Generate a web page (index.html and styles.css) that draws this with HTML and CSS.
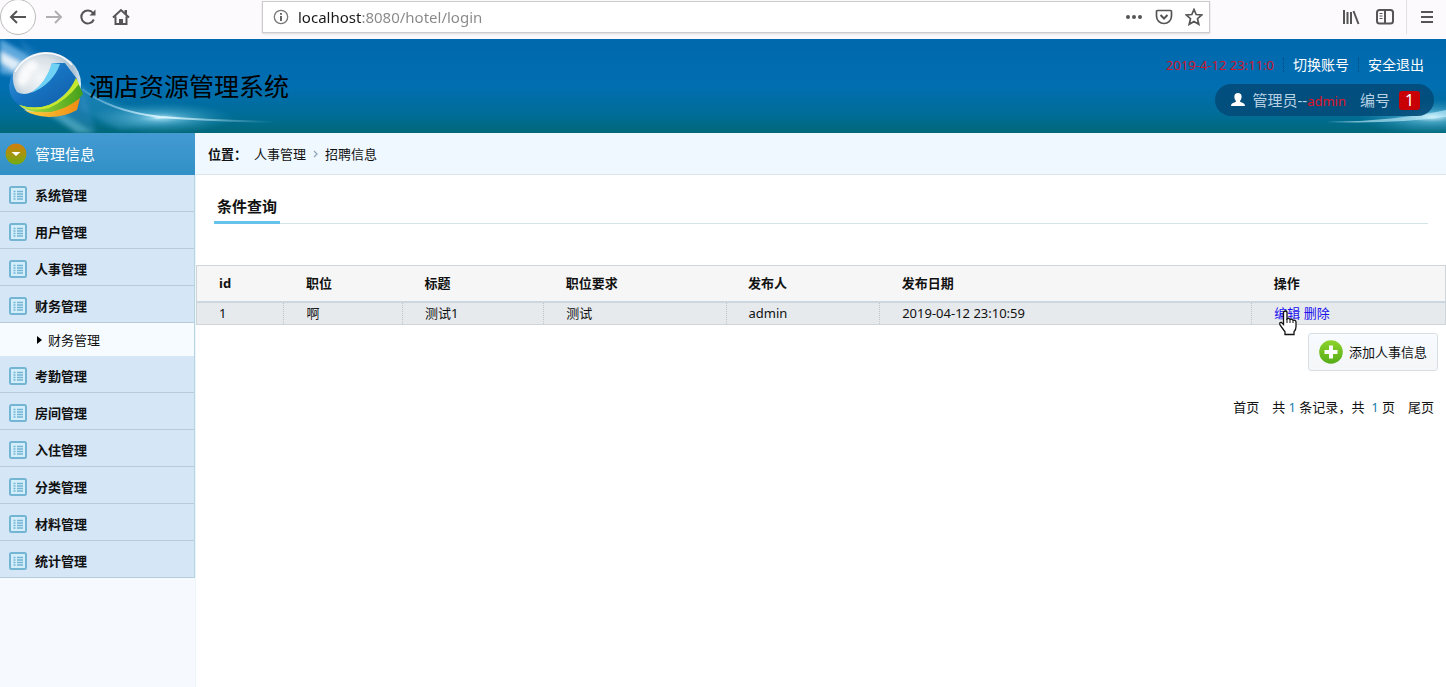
FILE: index.html
```html
<!DOCTYPE html>
<html lang="zh-CN">
<head>
<meta charset="utf-8">
<title>酒店资源管理系统</title>
<link rel="stylesheet" href="styles.css">
</head>
<body>
<div class="toolbar">
  <div class="nav-buttons">
    <button class="tool back" aria-label="Back"><svg width="20" height="18" viewBox="0 0 20 18"><path d="M18 9H3M9 3L3 9l6 6" class="stroke"/></svg></button>
    <button class="tool forward" aria-label="Forward"><svg width="20" height="18" viewBox="0 0 20 18"><path d="M2 9h15M11 3l6 6-6 6" class="stroke"/></svg></button>
    <button class="tool" aria-label="Reload"><svg width="18" height="18" viewBox="0 0 18 18"><path d="M14.800 11.500A6.500 6.500 0 1 1 14 5" class="stroke"/><path d="M16.500 1.500v6h-6z" fill="#555"/></svg></button>
    <button class="tool" aria-label="Home"><svg width="18" height="18" viewBox="0 0 18 18"><path d="M1 9.500L9 2l8 7.500M3.500 8.500V16h11V8.500" class="stroke"/><path d="M7 16v-5h4v5zM12.500 2H15v4.500l-2.500-2z" fill="#555"/></svg></button>
  </div>
  <div class="address">
    <svg width="16" height="16" viewBox="0 0 16 16"><circle cx="8" cy="8" r="6.700" fill="none" stroke="#777" stroke-width="1.300"/><path d="M8 7v5M8 4v1.800" stroke="#555" stroke-width="1.800"/></svg>
    <input class="url" type="text" aria-label="Address" value="localhost:8080/hotel/login">
    <button class="tool" aria-label="Page actions"><svg width="18" height="6" viewBox="0 0 18 6" fill="#555"><circle cx="3" cy="3" r="2"/><circle cx="9" cy="3" r="2"/><circle cx="15" cy="3" r="2"/></svg></button>
    <button class="tool" aria-label="Pocket"><svg width="18" height="18" viewBox="0 0 18 18"><path d="M2.500 2.500h13q1 0 1 1V8a7.500 7.500 0 0 1-15 0V3.500q0-1 1-1z" class="stroke thin"/><path d="M5.500 7L9 10.500 12.500 7" class="stroke"/></svg></button>
    <button class="tool" aria-label="Bookmark"><svg width="18" height="18" viewBox="0 0 18 18"><path d="M9 1.500l2.200 5 5.500.5-4.200 3.700 1.300 5.600L9 13.400l-4.800 2.900 1.300-5.600L1.300 7l5.500-.5z" class="stroke thin"/></svg></button>
  </div>
  <div class="side-buttons">
    <button class="tool" aria-label="Library"><svg width="18" height="18" viewBox="0 0 18 18"><path d="M2 2v14M5.500 4v12M9 4v12M11.500 3L16.500 16" class="stroke"/></svg></button>
    <button class="tool" aria-label="Sidebars"><svg width="18" height="18" viewBox="0 0 18 18"><rect x="1" y="2" width="16" height="13.500" rx="2.500" class="stroke"/><path d="M9 2v13" class="stroke"/><path d="M3.500 5.500h3M3.500 8h3M3.500 10.500h3" stroke="#555"/></svg></button>
    <button class="tool menu" aria-label="Menu"><svg width="14" height="16" viewBox="0 0 14 16"><path d="M1 3h12M1 8h12M1 13h12" class="stroke"/></svg></button>
  </div>
</div>

<header class="banner">
  <svg class="glow glow-left" width="300" height="94" viewBox="0 0 300 94">
    <defs>
      <radialGradient id="flare"><stop offset="0" stop-color="#dff8ff" stop-opacity=".95"/><stop offset=".3" stop-color="#6fc4e2" stop-opacity=".6"/><stop offset="1" stop-color="#2a94c0" stop-opacity="0"/></radialGradient>
      <linearGradient id="trail"><stop offset="0" stop-color="#8fcdf0" stop-opacity=".3"/><stop offset=".42" stop-color="#dff7ff"/><stop offset="1" stop-color="#79c9df" stop-opacity="0"/></linearGradient>
      <filter id="soft" x="-20%" y="-20%" width="140%" height="140%"><feGaussianBlur stdDeviation="2"/></filter>
    </defs>
    <g filter="url(#soft)">
      <path d="M0 0L28 16 46 42 0 34z" fill="#7dbdec" opacity=".75"/>
      <path d="M0 12L22 24 14 32 0 23z" fill="#fff" opacity=".8"/>
      <path d="M20 0L84 52 96 94 75 94 40 60z" fill="#4c9dd4" opacity=".3"/>
      <path d="M50 66L94 94H78L42 72z" fill="#6bc0d0" opacity=".5"/>
      <path d="M80 44Q115 74 200 80L120 90 80 70z" fill="#3c9ac6" opacity=".35"/>
    </g>
    <ellipse cx="160" cy="79" rx="75" ry="16" fill="url(#flare)"/>
    <ellipse cx="158" cy="79" rx="24" ry="5" fill="url(#flare)"/>
    <path d="M82 50Q110 72 160 78Q215 82 275 83" fill="none" stroke="url(#trail)" stroke-width="2"/>
  </svg>
  <svg class="glow glow-right" width="200" height="94" viewBox="0 0 200 94">
    <ellipse cx="186" cy="78" rx="75" ry="18" fill="url(#flare)"/>
    <path d="M80 83Q150 82 200 71V78Q150 85 80 83z" fill="#c9f3ff" opacity=".6"/>
  </svg>
  <div class="brand">
    <svg width="78" height="72" viewBox="0 0 78 72">
      <defs>
        <radialGradient id="globe" cx=".42" cy=".4" r=".6"><stop offset="0" stop-color="#f4f7f9"/><stop offset=".5" stop-color="#d9e1e7"/><stop offset=".8" stop-color="#a9c1d4"/><stop offset="1" stop-color="#e2f3fc"/></radialGradient>
        <linearGradient id="blue" x2="1" y2="1"><stop offset="0" stop-color="#3897de"/><stop offset=".5" stop-color="#1672c0"/><stop offset="1" stop-color="#125ba5"/></linearGradient>
        <linearGradient id="green" x1="0" x2="1"><stop offset="0" stop-color="#b8e345"/><stop offset="1" stop-color="#43a019"/></linearGradient>
        <linearGradient id="orange" x1="0" x2="1"><stop offset="0" stop-color="#ffd23f"/><stop offset="1" stop-color="#f08b12"/></linearGradient>
      </defs>
      <ellipse cx="39" cy="34" rx="35" ry="32" fill="url(#globe)"/>
      <path d="M10 33Q11 17 24 10q8 1 7 9-8 2-8 10l-7 8z" fill="#fff" opacity=".8" filter="url(#soft)"/>
      <path d="M8 22Q17 5 38 3q17 0 27 12" fill="none" stroke="#fff" stroke-width="1.500" opacity=".9"/>
      <path d="M6 23Q5 35 10 42 17 46 25 42 40 33 45 13H58L70 29Q58 48 42 55 26 61 12 55 2 48 2 36 3 28 6 23z" fill="url(#blue)"/>
      <path d="M24 43Q39 33 45 13l8 1Q46 34 24 43z" fill="#6fd2f5"/>
      <path d="M69 28L76 44Q68 54 57 59 43 64 28 62 18 60 12 55 28 60 42 55 60 48 69 28z" fill="url(#green)"/>
      <path d="M69 28l3 6Q60 50 42 58 27 62 12 55 28 60 42 55 60 48 69 28z" fill="#c7e82e"/>
      <path d="M17 60Q28 63 44 62 61 58 73 48L70 60Q58 67 42 67 26 66 17 60z" fill="url(#orange)"/>
    </svg>
    <h1 class="brand-name">酒店资源管理系统</h1>
  </div>
  <div class="account">
    <div class="quick-links">
      <span class="clock">2019-4-12 23:11:0</span>
      <a href="#">切换账号</a>
      <a href="#">安全退出</a>
    </div>
    <div class="user-pill">
      <svg width="14" height="14" viewBox="0 0 14 14"><path d="M7 0c5 0 4 6 2 8 0 2 5 1 5 5H0c0-4 5-3 5-5C3 6 2 0 7 0z" fill="#fff"/></svg>
      <span class="role">管理员--<b class="user-name">admin</b></span>
      <span>编号</span>
      <span class="badge">1</span>
    </div>
  </div>
</header>

<div class="workspace">
  <nav class="sidebar">
    <h2 class="sidebar-title"><svg width="22" height="22" viewBox="0 0 22 22"><defs><linearGradient id="knob" x2="0" y2="1"><stop offset="0" stop-color="#d57d0b"/><stop offset="1" stop-color="#72ad13"/></linearGradient></defs><circle cx="11" cy="11" r="10.500" fill="url(#knob)"/><path d="M6.500 9h9L11 13z" fill="#fff"/></svg>管理信息</h2>
    <svg class="symbols"><symbol id="list" viewBox="0 0 18 18"><rect x="1" y="1" width="16" height="16" rx="1.500" fill="#d3eefa" stroke="#74b5d4" stroke-width="2"/><path d="M4.500 5.500h2M8 5.500h6M4.500 8h2M8 8h6M4.500 10.500h2M8 10.500h6M4.500 13h2M8 13h6" stroke="#74b5d4" stroke-width="1.300"/></symbol></svg>
    <ul class="menu-list">
      <li><a href="#"><svg class="list-icon"><use href="#list"/></svg>系统管理</a></li>
      <li><a href="#"><svg class="list-icon"><use href="#list"/></svg>用户管理</a></li>
      <li><a href="#"><svg class="list-icon"><use href="#list"/></svg>人事管理</a></li>
      <li><a href="#"><svg class="list-icon"><use href="#list"/></svg>财务管理</a>
        <a href="#" class="sub"><svg width="5" height="8" viewBox="0 0 5 8"><path d="M0 0l5 4-5 4z"/></svg>财务管理</a></li>
      <li><a href="#"><svg class="list-icon"><use href="#list"/></svg>考勤管理</a></li>
      <li><a href="#"><svg class="list-icon"><use href="#list"/></svg>房间管理</a></li>
      <li><a href="#"><svg class="list-icon"><use href="#list"/></svg>入住管理</a></li>
      <li><a href="#"><svg class="list-icon"><use href="#list"/></svg>分类管理</a></li>
      <li><a href="#"><svg class="list-icon"><use href="#list"/></svg>材料管理</a></li>
      <li><a href="#"><svg class="list-icon"><use href="#list"/></svg>统计管理</a></li>
    </ul>
  </nav>

  <main class="content">
    <div class="crumbs"><b>位置<span class="mark">：</span></b><a href="#">人事管理</a><svg width="5" height="8" viewBox="0 0 5 8"><path d="M1 1l3 3-3 3" fill="none" stroke="#8fa8b8" stroke-width="1.300"/></svg><a href="#">招聘信息</a></div>
    <div class="tabs"><a href="#" class="tab">条件查询</a></div>
    <table class="records">
      <colgroup><col class="c-id"><col class="c-post"><col class="c-title"><col class="c-need"><col class="c-author"><col class="c-date"><col></colgroup>
      <thead><tr><th>id</th><th>职位</th><th>标题</th><th>职位要求</th><th>发布人</th><th>发布日期</th><th>操作</th></tr></thead>
      <tbody><tr><td>1</td><td>啊</td><td>测试1</td><td>测试</td><td>admin</td><td>2019-04-12 23:10:59</td>
        <td><span class="actions"><a href="#">编辑</a> <a href="#">删除</a><svg class="pointer" width="20" height="26" viewBox="0 0 20 26"><path d="M5.500 2q2-2 3.500 0v7q2-1.500 3 .5 2-1 3 .8 2.500-.6 3 1.500v5q0 3-2 5v2.700H7v-2.700L2 15q-1-3 1.500-2.500l2 2z" fill="#fff" stroke="#111" stroke-width="1.300"/><path d="M9 9v4M12 9.500V13M15 10.500V13" stroke="#111"/></svg></span></td></tr></tbody>
    </table>
    <div class="add-row">
      <button class="add"><svg width="24" height="24" viewBox="0 0 24 24"><defs><linearGradient id="plus" x2="0" y2="1"><stop offset="0" stop-color="#8ed32b"/><stop offset="1" stop-color="#55ad18"/></linearGradient></defs><circle cx="12" cy="12" r="11.800" fill="url(#plus)"/><path d="M12 5.500v13M5.500 12h13" stroke="#fff" stroke-width="4"/></svg>添加人事信息</button>
    </div>
    <div class="pager"><a href="#">首页</a><span>共 <i>1</i> 条记录<span class="mark">，</span>共 &nbsp;<i>1</i> 页</span><a href="#">尾页</a></div>
  </main>
</div>
</body>
</html>
```

FILE: styles.css
```css
* { box-sizing: border-box; }
body {
  margin: 0;
  min-height: 100vh;
  display: flex;
  flex-direction: column;
  background: #fff;
  color: #111;
  font: 13px/20px "Noto Sans", "Noto Sans CJK SC", sans-serif;
}
a { color: inherit; text-decoration: none; }
button { font: inherit; color: inherit; }
svg { display: block; flex: none; }
.mark { font-family: "Noto Sans CJK TC", sans-serif; line-height: 1; }

.toolbar {
  display: flex;
  align-items: center;
  height: 39px;
  padding-bottom: 5px;
  background: #fcfafd;
}
.tool {
  display: flex;
  align-items: center;
  justify-content: center;
  padding: 0;
  border: 0;
  background: none;
}
.stroke { fill: none; stroke: #555; stroke-width: 2; }
.thin { stroke-width: 1.7; }
.nav-buttons { display: flex; align-items: center; gap: 15px; width: 262px; }
.nav-buttons .back {
  width: 36px;
  height: 36px;
  margin-right: -7px;
  border: 1px solid #bbb;
  border-radius: 50%;
  background: #fff;
}
.forward { opacity: .45; }
.address {
  flex: 1;
  display: flex;
  align-items: center;
  gap: 12px;
  height: 32px;
  padding: 0 6px 0 10px;
  border: 1px solid #ccc;
  background: #fff;
  box-shadow: 0 1px 2px #0002;
}
.url {
  flex: 1;
  min-width: 0;
  margin-left: -3px;
  padding: 0;
  border: 0;
  outline: 0;
  font: 15px/24px "Noto Sans", "Noto Sans CJK SC", sans-serif;
  color: transparent;
  background: linear-gradient(90deg, #1a1a1a 64px, #888 64px);
  -webkit-background-clip: text;
  background-clip: text;
}
.side-buttons {
  display: flex;
  align-items: center;
  justify-content: flex-end;
  gap: 16px;
  width: 236px;
  padding-right: 12px;
}
.menu { height: 34px; padding-left: 13px; border-left: 1px solid #e2e0e4; margin-left: -4px; }

.banner {
  position: relative;
  display: flex;
  justify-content: space-between;
  height: 94px;
  padding: 0 12px 0 7px;
  background: linear-gradient(#0068ad, #016eb1 50%, #006d98 80%, #016879);
}
.glow { position: absolute; top: 0; }
.glow-left { left: 0; }
.glow-right { right: 0; }
.brand { position: relative; display: flex; align-items: center; gap: 4px; }
.brand-name { margin: 0; font-size: 25px; font-weight: 400; line-height: 36px; color: #000; }
.account {
  position: relative;
  display: flex;
  flex-direction: column;
  align-items: flex-end;
  gap: 9px;
  padding-top: 16px;
}
.quick-links { display: flex; align-items: center; font-size: 14px; color: #fff; }
.quick-links a { margin-left: 9px; padding-left: 9px; border-left: 1px dotted #034b7a; line-height: 14px; }
.quick-links a:last-child { padding-right: 10px; }
.clock { font-size: 13px; color: #d0142c; }
.user-pill {
  display: flex;
  align-items: center;
  height: 32px;
  padding: 0 14px 0 16px;
  border-radius: 16px;
  background: #024a77e0;
  color: #b8d2e3;
  font-size: 15px;
}
.role { margin: 0 14px 0 7px; }
.user-name { font-size: 13px; font-weight: 400; color: #e01127; }
.badge {
  width: 21px;
  margin-left: 9px;
  border-radius: 3px;
  background: #c80006;
  color: #fff;
  font-size: 16px;
  line-height: 19px;
  text-align: center;
}

.workspace { flex: 1; display: flex; }
.sidebar { width: 196px; background: #f6faff; border-right: 1px solid #edf6fc; }
.sidebar-title {
  display: flex;
  align-items: center;
  gap: 8px;
  height: 42px;
  margin: 0;
  padding-left: 5px;
  background: linear-gradient(#439bd2, #3190c6);
  color: #fff;
  font-size: 15px;
  font-weight: 400;
}
.symbols { position: absolute; width: 0; height: 0; }
.menu-list { margin: 0; padding: 0; list-style: none; border-right: 1px solid #b7d5df; }
.menu-list a {
  display: flex;
  align-items: center;
  gap: 8px;
  height: 37px;
  padding: 3px 0 0 9px;
  border-bottom: 1px solid #b8cbda;
  background: #d5e6f7;
  font-weight: 700;
}
.list-icon { width: 18px; height: 18px; }
.menu-list .sub {
  height: 33px;
  gap: 6px;
  padding: 0 0 0 37px;
  border-bottom: 0;
  background: #f6fbff;
  font-weight: 400;
}

.content { flex: 1; min-width: 0; }
.crumbs {
  display: flex;
  align-items: center;
  gap: 7px;
  height: 42px;
  padding-left: 12px;
  border-bottom: 1px solid #d9e6f0;
  background: #eff7ff;
}
.tabs { display: flex; height: 49px; margin: 0 18px 41px; border-bottom: 1px solid #d5e3ea; }
.tab {
  height: 49px;
  padding: 19px 3px 0;
  border-bottom: 3px solid #66c4ec;
  font-size: 15px;
  font-weight: 700;
  line-height: 24px;
}
.records {
  width: 100%;
  table-layout: fixed;
  border-collapse: collapse;
  border: 1px solid #cfd4d8;
}
.records th, .records td { padding: 0 0 0 22px; text-align: left; white-space: nowrap; }
.records th { height: 36px; background: #f6f6f6; border-bottom: 2px solid #cbd6df; }
.records td { height: 23px; background: #e6eaed; border-right: 1px dotted #bcc4ca; }
.c-id { width: 7%; }
.c-post { width: 9.5%; }
.c-title { width: 11.3%; }
.c-need { width: 14.6%; }
.c-author { width: 12.3%; }
.c-date { width: 29.8%; }
.actions { position: relative; color: #1a10ee; }
.pointer { position: absolute; left: 4px; top: 6px; }
.add-row { display: flex; justify-content: flex-end; padding: 8px 8px 0; }
.add {
  display: flex;
  align-items: center;
  gap: 6px;
  height: 38px;
  padding: 0 10px;
  border: 1px solid #d8dfe4;
  border-radius: 3px;
  background: linear-gradient(#f8fbff, #f4f6f8);
}
.pager { display: flex; justify-content: flex-end; gap: 13px; padding: 26px 12px 0; }
.pager i { font-style: normal; color: #1b7cad; }
```
